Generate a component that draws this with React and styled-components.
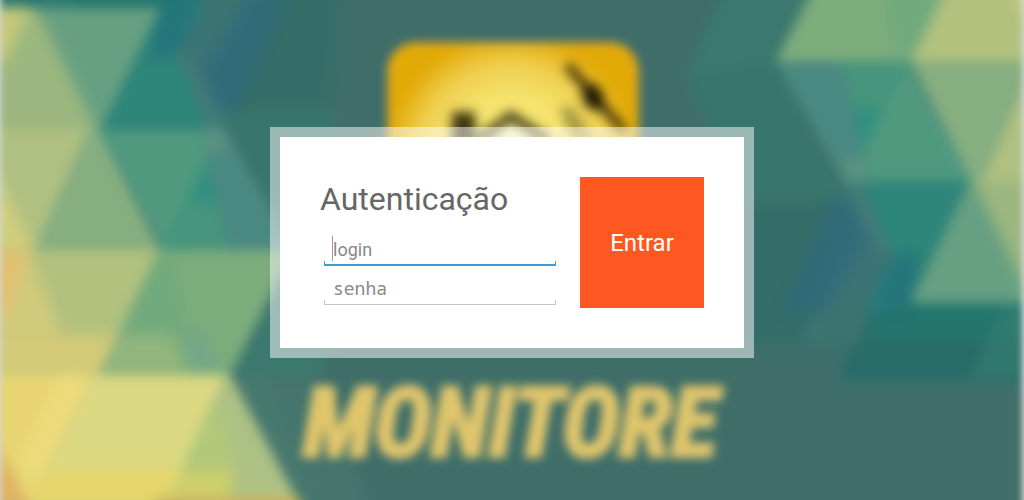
import React from "react";
import styled, { createGlobalStyle } from "styled-components";

const GlobalStyle = createGlobalStyle`
  *, *::before, *::after { box-sizing: border-box; }
  body {
    margin: 0;
    background: #3f6e69;
    font-family: Roboto, "Liberation Sans", sans-serif;
  }
`;

const Page = styled.main`
  position: relative;
  min-height: 100vh;
  display: grid;
  place-items: center;
  padding: 16px 16px 32px;
  overflow: hidden;
`;

const Artwork = styled.svg`
  position: absolute;
  inset: 0;
  width: 100%;
  height: 100%;
`;

const Wordmark = styled.text`
  font-family: "Liberation Sans Narrow", "Roboto Condensed", Roboto, sans-serif;
  font-size: 97px;
  font-weight: 700;
  font-style: italic;
  fill: #e0c56c;
  stroke: #e0c56c;
  stroke-width: 4px;
`;

const Dialog = styled.form`
  position: relative;
  display: flex;
  flex-wrap: wrap;
  gap: 20px;
  padding: 40px;
  border: 10px solid rgba(255, 255, 255, 0.5);
  background: #fff;
  background-clip: padding-box;
`;

const Credentials = styled.div`
  width: 240px;
  display: flex;
  flex-direction: column;
`;

const Title = styled.h1`
  margin: 0 0 8px;
  color: #666;
  font-size: 32px;
  font-weight: 400;
  line-height: 45px;
`;

const Field = styled.label`
  position: relative;
  display: block;
  height: 39px;
  padding: 0 4px;

  &::before {
    content: "";
    display: ${(p) => (p.$active ? "block" : "none")};
    position: absolute;
    left: 12px;
    top: 6px;
    width: 1px;
    height: 25px;
    background: #999;
  }

  &::after {
    content: "";
    position: absolute;
    left: 4px;
    right: 4px;
    top: 31px;
    height: 5px;
    border: solid ${(p) => (p.$active ? "#3a9fd0" : "#c4c4c4")};
    border-width: 0 1px ${(p) => (p.$active ? "2px" : "1px")};
  }
`;

const TextInput = styled.input`
  display: block;
  width: 100%;
  height: 36px;
  padding: 3px 9px 0;
  border: 0;
  outline: 0;
  background: transparent;
  color: #555;
  font-family: ${(p) => (p.$mono ? '"Noto Sans Mono", "DejaVu Sans Mono", monospace' : 'Roboto, "Liberation Sans", sans-serif')};
  font-size: 18px;

  &::placeholder { color: #888; opacity: 1; }
`;

const Submit = styled.button`
  width: 124px;
  min-height: 131px;
  padding: 2px 0 0;
  border: 0;
  background: #ff5722;
  color: #fff;
  font-family: inherit;
  font-size: 24px;
  cursor: pointer;
`;

/* Points, colour, and whether the shape is a soft tint inside a larger facet. */
const facets = [
  ["-60,-70 230,-70 205,8 -60,8", "#24756e"],
  ["46,-67 230,-67 215,-30 46,-30", "#286b68"],
  ["40,-67 100,-67 65,8 40,8", "#337d70", true],
  ["195,-34 340,-34 330,116 200,116", "#316f68", true],
  ["220,108 330,108 384,236 294,252", "#38756b"],
  ["294,250 384,236 350,311 320,376 230,376 262,311", "#3b786e"],
  ["230,375 320,375 372,510 302,510", "#47786e", true],
  ["230,375 270,375 320,510 302,510", "#47786e"],
  ["214,-34 270,-34 236,60 228,131 176,55", "#3b7475"],
  ["216,-34 262,-34 235,10 198,10", "#3b746c", true],
  ["246,-2 290,-2 238,112 212,112 204,70", "#2f6a7b", true],
  ["160,8 182,0 205,0 176,55 226,132 100,130", "#2e857a"],
  ["160,0 200,0 176,55 150,60", "#20707b", true],
  ["176,50 188,55 230,131 208,131", "#417b78"],
  ["28,8 160,8 100,130 92,130", "#669f81"],
  ["-60,8 35,8 98,130 -60,130", "#9cb77f"],
  ["35,8 50,20 99,130 92,130", "#80ab80", true],
  ["-60,8 30,8 5,62 -60,60", "#d6d078", true],
  ["-60,130 88,130 35,250 -60,250", "#afc080"],
  ["-60,165 -8,165 35,250 -60,250", "#dcd47b", true],
  ["88,130 98,130 160,250 35,250", "#86ae80"],
  ["98,130 225,130 213,150 163,250", "#50997f"],
  ["213,148 235,200 265,250 160,250", "#46957c"],
  ["213,150 234,202 190,202", "#268d83", true],
  ["200,128 225,128 294,250 228,250", "#4a8981"],
  ["204,130 220,130 226,150 210,154", "#6a9a7f", true],
  ["-60,250 160,250 100,375 -60,375", "#b2c17e"],
  ["-60,250 28,250 62,335 -60,335", "#dcce79", true],
  ["-60,335 120,335 100,375 -60,375", "#e0ce77", true],
  ["-60,250 30,250 5,315 -60,310", "#e8bd6e", true],
  ["160,250 294,250 230,375 100,375", "#7dac7c"],
  ["160,250 175,250 185,335 120,335", "#6daa7c", true],
  ["120,335 172,335 188,375 100,375", "#98b97e", true],
  ["180,322 200,330 226,370 190,370", "#70a78c", true],
  ["-60,375 92,375 30,510 -60,510", "#e8d571"],
  ["60,375 90,375 35,490 20,460", "#efde80", true],
  ["92,375 228,375 165,510 25,510", "#dbd882"],
  ["225,375 230,375 303,510 165,510", "#adc184"],
  ["215,400 238,468 182,468", "#b4cb76", true],
  ["45,470 181,470 163,510 25,510", "#e8d662", true],
  ["181,470 235,470 225,510 163,510", "#dad463", true],
  ["-60,400 -5,440 32,510 -60,510", "#deb464"],
];

const Facets = () =>
  facets.map(([points, fill, tint]) => (
    <polygon
      key={points}
      points={points}
      fill={fill}
      opacity={tint ? 0.75 : 1}
      filter={tint ? "url(#soft)" : undefined}
    />
  ));

const Blur = ({ id, amount }) => (
  <filter id={id} filterUnits="userSpaceOnUse" x="-80" y="-220" width="1220" height="800" colorInterpolationFilters="sRGB">
    <feGaussianBlur stdDeviation={amount} />
  </filter>
);

function Backdrop() {
  return (
    <Artwork viewBox="0 0 1024 500" preserveAspectRatio="xMidYMid slice" aria-hidden="true">
      <defs>
        <Blur id="edge" amount="3" />
        <Blur id="soft" amount="5" />
        <clipPath id="frame">
          <rect x="1" y="-50" width="1021" height="600" />
        </clipPath>
        <radialGradient id="glow" gradientUnits="userSpaceOnUse" cx="512" cy="160" r="126">
          <stop offset="0" stopColor="#f7e97c" />
          <stop offset="0.5" stopColor="#f5e36c" />
          <stop offset="0.75" stopColor="#efcf50" />
          <stop offset="1" stopColor="#e2aa06" />
        </radialGradient>
      </defs>
      <rect x="-500" y="-500" width="2024" height="1500" fill="#d5d8d8" />
      <g filter="url(#edge)">
        <g clipPath="url(#frame)">
          <g filter="url(#soft)">
            <rect x="-80" y="-80" width="1184" height="660" fill="#3f6e69" />
            <Facets />
            <g transform="rotate(180 535 155.5)">
              <Facets />
            </g>
            <path d="M155 497H300V510H155Z" fill="#cdb560" />
          </g>
        </g>
      </g>
      <g filter="url(#soft)">
        <rect x="388" y="43" width="250" height="250" rx="28" fill="url(#glow)" stroke="#c89a43" strokeWidth="2" />
        <g filter="url(#edge)">
          <path d="M452 112h23v36h-23z" fill="#3a330e" />
          <path d="M478 141L511 116L548 141" fill="none" stroke="#3a350f" strokeWidth="9" />
          <path d="M511 123L540 145H482Z" fill="#f8f2b8" />
          <path d="M559 108l14 0 20 32h-20z" fill="#a0953f" />
          <path d="M567 65L624 131" stroke="#2a2002" strokeWidth="8" fill="none" />
          <ellipse cx="593" cy="97" rx="10" ry="14" fill="#1a1402" transform="rotate(-25 593 97)" />
        </g>
        <Wordmark x="303" y="456">MONITORE</Wordmark>
      </g>
    </Artwork>
  );
}

export default function App() {
  return (
    <>
      <GlobalStyle />
      <Page>
        <Backdrop />
        <Dialog onSubmit={(e) => e.preventDefault()}>
          <Credentials>
            <Title>Autenticação</Title>
            <Field $active>
              <TextInput type="text" name="login" placeholder="login" aria-label="login" />
            </Field>
            <Field>
              <TextInput $mono type="password" name="senha" placeholder="senha" aria-label="senha" />
            </Field>
          </Credentials>
          <Submit type="submit">Entrar</Submit>
        </Dialog>
      </Page>
    </>
  );
}
